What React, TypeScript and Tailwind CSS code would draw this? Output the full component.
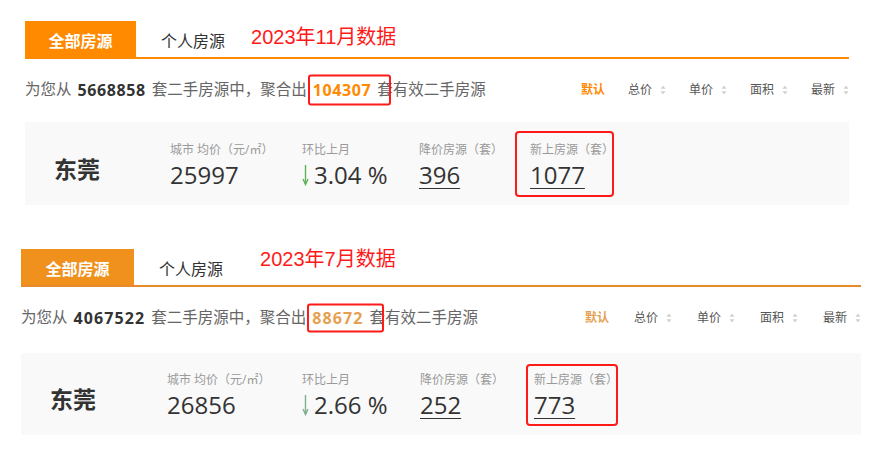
import React from 'react';

type SectionCfg = {
  ml: string;
  width: string;
  top: string;
  orange: string;
  line: string;
  hot: string;
  tabW: string;
  noteMl: string;
  noteMt: string;
  note: string;
  total: string;
  valid: string;
  validBox: { w: string; h: string };
  numTrack: string;
  sortGap: string;
  price: string;
  change: string;
  down: string;
  fresh: string;
  cityW: string;
  cols: string[];
  cardMt: string;
  cardH: string;
  cardPt: string;
  freshBox: string;
  arrow: string;
};

const sections: SectionCfg[] = [
  {
    ml: 'ml-[25px]',
    width: 'w-[824px]',
    top: 'pt-[21px]',
    orange: 'bg-[#ff8a00]',
    line: 'border-[#ff8a00]',
    hot: 'text-[#ff8a00]',
    tabW: 'w-[111px]',
    noteMl: 'ml-[26px]',
    noteMt: 'mt-[2px]',
    note: '2023年11月数据',
    total: '5668858',
    valid: '104307',
    validBox: { w: 'w-[83px]', h: 'h-[31px]' },
    numTrack: 'tracking-[0.6px]',
    sortGap: 'gap-[23px]',
    price: '25997',
    change: '3.04',
    down: '396',
    fresh: '1077',
    cityW: 'w-[116px]',
    cols: ['w-[132px]', 'w-[117px]', 'w-[111px]'],
    cardMt: 'mt-[19px]',
    cardH: 'h-[83px]',
    cardPt: 'pt-[20px]',
    freshBox: '-left-[15px] -top-[11px] w-[99px] h-[66px]',
    arrow: '#5fb25a',
  },
  {
    ml: 'ml-[21px]',
    width: 'w-[840px]',
    top: 'mt-[44px]',
    orange: 'bg-[#f0911e]',
    line: 'border-[#e68b2c]',
    hot: 'text-[#e5a150]',
    tabW: 'w-[113px]',
    noteMl: 'ml-[37px]',
    noteMt: '-mt-[4px]',
    note: '2023年7月数据',
    total: '4067522',
    valid: '88672',
    validBox: { w: 'w-[77px]', h: 'h-[29px]' },
    numTrack: 'tracking-[1.1px]',
    sortGap: 'gap-[25px]',
    price: '26856',
    change: '2.66',
    down: '252',
    fresh: '773',
    cityW: 'w-[117px]',
    cols: ['w-[135px]', 'w-[118px]', 'w-[114px]'],
    cardMt: 'mt-[22px]',
    cardH: 'h-[82px]',
    cardPt: 'pt-[19px]',
    freshBox: '-left-[8px] -top-[8px] w-[92px] h-[62px]',
    arrow: '#7fae8e',
  },
];

function SortIcon() {
  return (
    <svg width="6" height="10" viewBox="0 0 6 10" className="ml-[8px]">
      <path d="M3 0.5 L5.5 3.8 H0.5 Z" fill="#d0d0d0" />
      <path d="M3 9.5 L5.5 6.2 H0.5 Z" fill="#d0d0d0" />
    </svg>
  );
}

function DownArrow({ color }: { color: string }) {
  return (
    <svg width="7" height="22" viewBox="0 0 7 22" className="mr-[5px] mt-[4px]">
      <line x1="3.5" y1="1" x2="3.5" y2="20" stroke={color} strokeWidth="1.4" />
      <polyline points="1,15 3.5,20.5 6,15" fill="none" stroke={color} strokeWidth="1.4" />
    </svg>
  );
}

function Section({ s }: { s: SectionCfg }) {
  return (
    <div className={`${s.ml} ${s.width} ${s.top}`}>
      {/* tabs */}
      <div className={`flex items-start h-[38px] border-b-2 ${s.line}`}>
        <div className={`${s.tabW} h-[36px] ${s.orange} text-white font-bold text-[16px] flex items-center justify-center pt-[3px]`}>
          全部房源
        </div>
        <div className="ml-[25px] h-[36px] flex items-center pt-[3px] text-[16px] text-[#333]">个人房源</div>
        <div className={`${s.noteMl} ${s.noteMt} text-[20px] leading-[28px] text-[#ff1a1a] font-['Liberation_Sans','Noto_Sans_CJK_SC',sans-serif]`}>
          {s.note}
        </div>
      </div>

      {/* summary + sort */}
      <div className="mt-[18px] h-[26px] flex items-center text-[15.5px] text-[#666]">
        <span>为您从</span>
        <span className={`mx-[6px] font-bold text-[16px] ${s.numTrack} text-[#333]`}>{s.total}</span>
        <span>套二手房源中，聚合出</span>
        <span className={`relative mx-[6px] font-bold text-[16px] ${s.numTrack} ${s.hot}`}>
          {s.valid}
          <span className={`absolute -left-[5px] top-1/2 -translate-y-1/2 ${s.validBox.w} ${s.validBox.h} border-2 border-[#ff1a1a] rounded-[3px]`} />
        </span>
        <span>套有效二手房源</span>
        <div className={`ml-auto flex items-center ${s.sortGap} text-[12px] text-[#555]`}>
          <span className={`${s.hot} font-bold`}>默认</span>
          {['总价', '单价', '面积', '最新'].map((t) => (
            <span key={t} className="flex items-center">
              {t}
              <SortIcon />
            </span>
          ))}
        </div>
      </div>

      {/* city stats */}
      <div className={`${s.cardMt} ${s.cardH} bg-[#f9f9f9] flex items-start ${s.cardPt} pl-[29px]`}>
        <div className={`${s.cityW} mt-[12px] text-[23px] leading-[30px] font-bold text-[#333]`}>东莞</div>
        <div className={s.cols[0]}>
          <div className="text-[12px] leading-[16px] text-[#999]">城市 均价（元/㎡）</div>
          <div className="mt-[2px] text-[24px] leading-[30px] text-[#333]">{s.price}</div>
        </div>
        <div className={s.cols[1]}>
          <div className="text-[12px] leading-[16px] text-[#999]">环比上月</div>
          <div className="mt-[2px] flex items-start text-[24px] leading-[30px] text-[#333]">
            <DownArrow color={s.arrow} />
            {s.change} %
          </div>
        </div>
        <div className={s.cols[2]}>
          <div className="text-[12px] leading-[16px] text-[#999]">降价房源（套）</div>
          <div className="mt-[2px] text-[24px] leading-[30px] text-[#333] underline underline-offset-[4px] decoration-1">{s.down}</div>
        </div>
        <div className="relative">
          <div className="text-[12px] leading-[16px] text-[#999]">新上房源（套）</div>
          <div className="mt-[2px] text-[24px] leading-[30px] text-[#333] underline underline-offset-[4px] decoration-1">{s.fresh}</div>
          <div className={`absolute ${s.freshBox} border-2 border-[#ff1a1a] rounded-[4px]`} />
        </div>
      </div>
    </div>
  );
}

export default function App() {
  return (
    <div className="w-[882px] h-[456px] bg-white overflow-hidden font-['Open_Sans','Noto_Sans_CJK_SC',sans-serif]">
      {sections.map((s, i) => (
        <Section key={i} s={s} />
      ))}
    </div>
  );
}
